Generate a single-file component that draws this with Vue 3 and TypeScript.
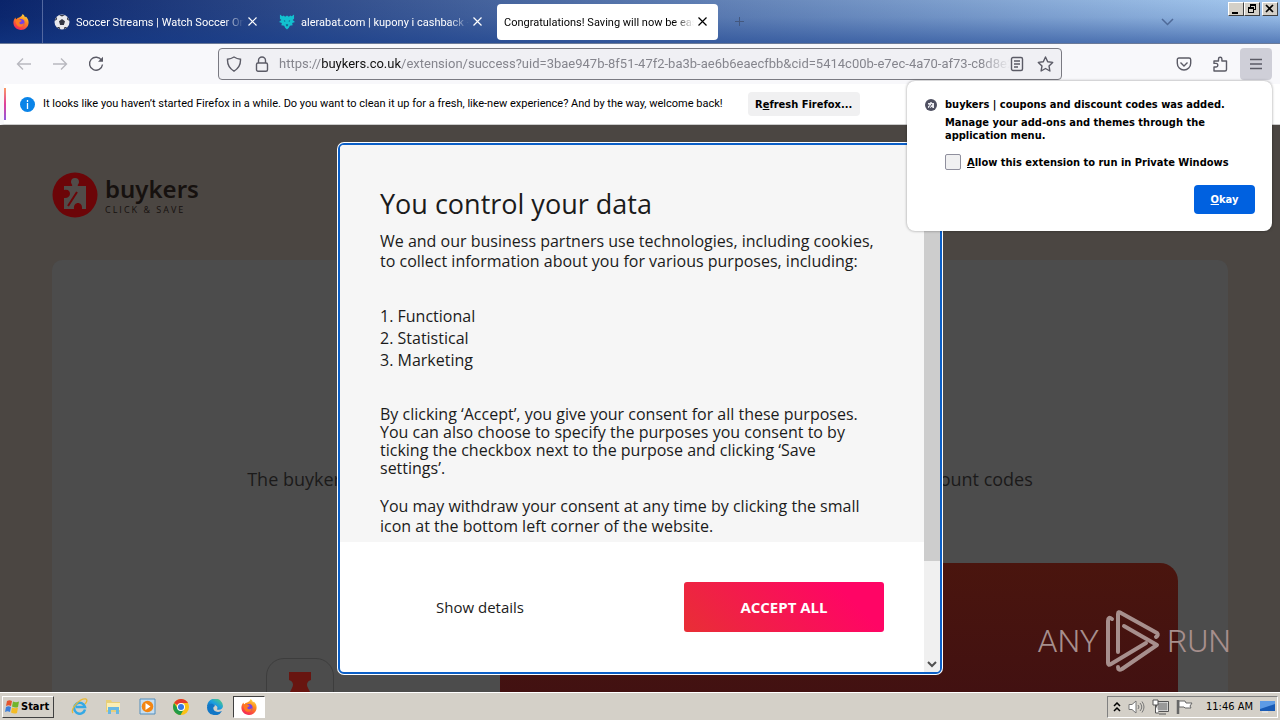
<script setup lang="ts">
import { ref } from 'vue'

interface Tab { title: string; icon: 'ball' | 'wolf' | null; active: boolean }

const tabs: Tab[] = [
  { title: 'Soccer Streams | Watch Soccer Online', icon: 'ball', active: false },
  { title: 'alerabat.com | kupony i cashback - zakupy', icon: 'wolf', active: false },
  { title: 'Congratulations! Saving will now be easier', icon: null, active: true },
]
const purposes = ['Functional', 'Statistical', 'Marketing']
const urlPath = '/extension/success?uid=3bae947b-8f51-47f2-ba3b-ae6b6eaecfbb&cid=5414c00b-e7ec-4a70-af73-c8d8e2'
const allowPrivate = ref(false)
const launchers = ['Internet Explorer', 'File Explorer', 'Media Player', 'Chrome', 'Edge', 'Firefox']
</script>

<template>
  <div class="desktop">
    <svg class="defs" width="0" height="0" aria-hidden="true">
      <defs>
        <linearGradient id="ffBody" x1="0.8" y1="0" x2="0.3" y2="1">
          <stop offset="0" stop-color="#ffe24a" /><stop offset=".4" stop-color="#ff8a1c" /><stop offset="1" stop-color="#f5225a" />
        </linearGradient>
        <linearGradient id="edgeBody" x1="0" y1="1" x2="1" y2="0">
          <stop offset="0" stop-color="#0c59a4" /><stop offset=".5" stop-color="#1b9de2" /><stop offset="1" stop-color="#5fd668" />
        </linearGradient>
        <symbol id="firefox" viewBox="0 0 16 16">
          <path d="M8 16C3.600 16 .4 12.700.4 8.600c0-2.400 1-3.900 2-5.200.1 1 .5 1.600 1 2 .6-1.300 1.700-1.700 2.300-1.700C7.800 2.900 9 1.700 9.600 0c1.300 1 2.100 2 2.400 3.300.5-.1.700-.4.800-.8C14.600 4.200 15.600 6 15.600 8.500 15.600 12.700 12.300 16 8 16Z" fill="url(#ffBody)" />
          <circle cx="8" cy="8.500" r="3.500" fill="#7542e5" />
          <path d="M2.500 6c1.500-1.300 3.600-1.200 4.700 0 1 .2 1.500.6 1.500 1-.9.700-2.200.7-2.400 2 .6 1.400 3.400 1.900 4.700-.2-.1 3-2.300 4.300-4.400 4C3.800 12.200 2.300 9 2.500 6Z" fill="#ff7a22" />
        </symbol>
      </defs>
    </svg>

    <header class="tabstrip">
      <button class="view" aria-label="Firefox View"><svg width="16" height="16"><use href="#firefox" /></svg></button>
      <div v-for="tab in tabs" :key="tab.title" class="tab" :class="{ active: tab.active }">
        <svg v-if="tab.icon === 'ball'" width="16" height="16" viewBox="0 0 16 16">
          <circle cx="8" cy="8" r="7.500" fill="#e9e9ec" />
          <path d="M8 5l3 2.200L9.900 11H6.100L5 7.200ZM5 .9 8 2.500 11 .9ZM.5 7 3 5.500 2.700 2.700ZM15.500 7 13 5.500l.3-2.800ZM2.500 13l3 .1.900 2.300ZM13.500 13l-3 .1-.9 2.300Z" fill="#343743" />
        </svg>
        <svg v-else-if="tab.icon === 'wolf'" width="16" height="16" viewBox="0 0 17 16">
          <path d="M1 0l2.500 2L5 1l1.500 1.500L8.500 1l2 1.500L12 1l1.500 1L16 0v4.500L14.500 6 17 8l-3 1 .5 2.500-3 .5-1 2-2 2-2-2-1-2-3-.5L3 9 0 8l2.500-2L1 4.500Z" fill="#12c1cf" />
          <path d="M5 6l2 1-1 1ZM12 6l-2 1 1 1ZM8.500 10l1.500 1-1.500 2L7 11Z" fill="#16618d" />
        </svg>
        <span class="tab-title">{{ tab.title }}</span>
        <button class="close" :aria-label="'Close ' + tab.title">
          <svg width="9" height="9" viewBox="0 0 9 9"><path d="M.5.5l8 8M8.500.5l-8 8" stroke="currentColor" stroke-width="1.200" /></svg>
        </button>
      </div>
      <button class="newtab" aria-label="New tab"><svg width="9" height="9" viewBox="0 0 9 9"><path d="M4.500 0v9M0 4.500h9" stroke="#44587f" /></svg></button>
      <button class="alltabs" aria-label="List all tabs"><svg width="13" height="8" viewBox="0 0 13 8"><path d="M1 1l5.500 5.500L12 1" fill="none" stroke="#4f6a98" stroke-width="1.500" /></svg></button>
      <div class="winbtns">
        <button aria-label="Minimize"><svg width="14" height="12"><path d="M3 9h6v2H3z" /></svg></button>
        <button aria-label="Restore"><svg width="14" height="12"><path d="M5 1h6v6H9V6h1V3H6v1H5zM3 4h6v6H3zM4 6v3h4V6z" fill-rule="evenodd" /></svg></button>
        <button class="shut" aria-label="Close window"><svg width="14" height="12"><path d="M3 2l7 7M10 2L3 9" stroke="#000" stroke-width="1.700" /></svg></button>
      </div>
    </header>

    <nav class="toolbar">
      <button class="tool faded" aria-label="Back"><svg width="16" height="16" viewBox="0 0 16 16"><path d="M15 8H1.500M7 2.500L1.500 8 7 13.500" /></svg></button>
      <button class="tool faded" aria-label="Forward"><svg width="16" height="16" viewBox="0 0 16 16"><path d="M1 8h13.500M9 2.500L14.500 8 9 13.500" /></svg></button>
      <button class="tool" aria-label="Reload"><svg width="16" height="16" viewBox="0 0 16 16"><path d="M13.600 4.300A6.500 6.500 0 1 0 14.500 8.500" /><path d="M15 .8v5h-5z" fill="#5b5b66" stroke="none" /></svg></button>
      <div class="urlbar">
        <svg width="16" height="16" viewBox="0 0 16 16"><path d="M8 1c2 1.300 4 2 6.500 2.200C14.800 9 12.500 12.600 8 15.200 3.500 12.600 1.200 9 1.500 3.200 4 3 6 2.300 8 1Z" /></svg>
        <svg class="lock" width="14" height="16" viewBox="0 0 14 16"><rect x="1.500" y="7" width="11" height="8.200" rx="1.500" /><path d="M3.500 7V4.500a3.500 3.500 0 0 1 7 0V7" /></svg>
        <div class="address">https://<b>buykers.co.uk</b>{{ urlPath }}</div>
        <button aria-label="Reader view"><svg width="14" height="16" viewBox="0 0 14 16"><rect x="1.500" y="1.500" width="11" height="13" rx="1.500" /><path d="M4 5h6M4 8h6M4 11h4" /></svg></button>
        <button class="star" aria-label="Bookmark"><svg width="17" height="16" viewBox="0 0 17 16"><path d="M8.500 1l2.200 4.700 5 .7-3.700 3.500.9 5.100-4.400-2.500L4.100 15l.9-5.100L1.300 6.400l5-.7Z" stroke-linejoin="round" /></svg></button>
      </div>
      <button class="tool" aria-label="Save to Pocket"><svg width="16" height="16" viewBox="0 0 16 16"><path d="M3 2h10c1 0 1.700.7 1.700 1.700v3.600a6.700 6.700 0 0 1-13.400 0V3.700C1.300 2.700 2 2 3 2Z" /><path d="M4.500 6.500L8 10l3.500-3.500" /></svg></button>
      <button class="tool" aria-label="Extensions"><svg width="16" height="16" viewBox="0 0 16 16"><path d="M2 15v-4h2a1.800 1.800 0 0 0 0-3.600H2V5h4.500V3a1.700 1.700 0 0 1 3.400 0v2H14.500v8.500q0 1.500-1.500 1.500Z" stroke-linejoin="round" /></svg></button>
      <button class="tool menu" aria-label="Application menu"><svg width="14" height="12" viewBox="0 0 14 12"><path d="M1 1.500h12M1 6h12M1 10.500h12" /></svg></button>
    </nav>

    <div class="infobar">
      <svg width="15" height="15" viewBox="0 0 15 15"><circle cx="7.500" cy="7.500" r="7.500" fill="#0a84e8" /><path d="M7.500 3v2M7.500 6v6" stroke="#fff" stroke-width="1.300" /></svg>
      <span>It looks like you haven’t started Firefox in a while. Do you want to clean it up for a fresh, like-new experience? And by the way, welcome back!</span>
      <button>R<u>e</u>fresh Firefox...</button>
    </div>

    <main class="page">
      <div class="brand">
        <svg width="46" height="46" viewBox="0 0 46 46">
          <circle cx="23" cy="23" r="22.500" fill="#6c0508" />
          <path d="M12 14h8c1-1-1-2-1-4a4 4 0 0 1 8 0c0 2-2 3-1 4h8v23h-4c1-8-9-8-8 0H12V26c8 1 8-10 0-8Z" fill="#514c49" />
          <path d="M25 20L16 34" stroke="#6c0508" stroke-width="2" />
        </svg>
        <div class="brand-text"><strong>buykers</strong><small>CLICK &amp; SAVE</small></div>
      </div>
      <section class="card">
        <p>The buykers extension is now installed and will automatically find you the best discount codes</p>
        <div class="pin"><svg width="24" height="24" viewBox="0 0 24 24"><path d="M1 0h22v8c-4 1-5 5-3 8l4 8H0l4-8c2-3 1-7-3-8Z" fill="#681510" /></svg></div>
        <div class="promo"></div>
      </section>
      <div class="watermark">
        <span>ANY</span>
        <svg width="56" height="64" viewBox="0 0 56 64">
          <g fill="none" stroke="#a78f8d" stroke-width="4" stroke-linejoin="round" stroke-linecap="round">
            <path d="M7 10Q3 7 3 12V54Q3 57 6 55L41 34" /><path d="M13 43V5Q13 2 16 4L52 24Q54 26 51 28" /><path d="M19 17L52 36 17 60Q13 62 13 58" />
          </g>
        </svg>
        <span>RUN</span>
      </div>

      <div class="overlay">
        <div class="modal" role="dialog" aria-labelledby="consent-title">
          <div class="modal-main">
            <div class="copy">
              <h1 id="consent-title">You control your data</h1>
              <p>We and our business partners use technologies, including cookies, to collect information about you for various purposes, including:</p>
              <ol><li v-for="(p, i) in purposes" :key="p">{{ i + 1 }}. {{ p }}</li></ol>
              <p class="consent">By clicking ‘Accept’, you give your consent for all these purposes. You can also choose to specify the purposes you consent to by ticking the checkbox next to the purpose and clicking ‘Save settings’.</p>
              <p>You may withdraw your consent at any time by clicking the small icon at the bottom left corner of the website.</p>
            </div>
            <div class="actions">
              <button class="details">Show details</button>
              <button class="accept">ACCEPT ALL</button>
            </div>
          </div>
          <div class="scroll"><i></i><svg width="10" height="7" viewBox="0 0 10 7"><path d="M1 1l4 4 4-4" fill="none" stroke="#505050" stroke-width="2" /></svg></div>
        </div>
      </div>
    </main>

    <aside class="popup" role="dialog" aria-label="Extension added">
      <svg width="12" height="12" viewBox="0 0 12 12"><circle cx="6" cy="6" r="6" fill="#4f5061" /><path d="M3 4h2a1 1 0 1 1 2 0h2v5H7.500a1 1 0 0 0-2 0H3V7c2 0 2-2 0-1.500Z" fill="#ececf1" /><path d="M7 5L4 9" stroke="#4f5061" /></svg>
      <div class="popup-body">
        <strong>buykers | coupons and discount codes was added.</strong>
        <p>Manage your add-ons and themes through the application menu.</p>
        <label><input v-model="allowPrivate" type="checkbox"><span><u>A</u>llow this extension to run in Private Windows</span></label>
        <button><u>O</u>kay</button>
      </div>
    </aside>

    <footer class="taskbar">
      <button class="start">
        <svg width="16" height="16" viewBox="0 0 16 16"><path d="M3 2c2-1 3-1 5 0L7 7C5 6 4 6 2 7Z" fill="#e4552d" /><path d="M9 2.500c2 1 4 1 6 0L14 8c-2 1-4 .5-6-.5Z" fill="#72b52c" /><path d="M2 8c2-1 3-1 5 0l-1 5c-2-1-3-1-5 0Z" fill="#3d7fd9" /><path d="M8 8.500c2 1 4 1 6 0L13 14c-2 1-4 .5-6-.5Z" fill="#f4bc26" /></svg>
        Start
      </button>
      <button v-for="(name, i) in launchers" :key="name" class="launch" :class="{ current: i === 5 }" :aria-label="name">
        <svg v-if="i === 0" width="17" height="17" viewBox="0 0 17 17"><path d="M14 11.500A5.500 5.500 0 1 1 14 9H5" fill="none" stroke="#35a9e5" stroke-width="2.500" /><path d="M2 15C-1 11 9 0 15 1c2 1 0 4-1 5" fill="none" stroke="#e8b936" stroke-width="1.300" /></svg>
        <svg v-else-if="i === 1" width="17" height="17" viewBox="0 0 17 17"><path d="M1 2h5l1 2h8v10H1Z" fill="#e8cf78" /><path d="M2 5h13v7H2Z" fill="#fbeeb4" /><path d="M3 16V9h11v7h-3v-4H6v4Z" fill="#68b8e3" /></svg>
        <svg v-else-if="i === 2" width="17" height="17" viewBox="0 0 17 17"><path d="M1 1h15v15H1Z" fill="#c7def0" stroke="#538fbd" /><circle cx="8.500" cy="8.500" r="5.800" fill="#f38612" /><path d="M6.500 5l5 3.500-5 3.500Z" fill="#fff" /></svg>
        <svg v-else-if="i === 3" width="16" height="16" viewBox="0 0 16 16"><circle cx="8" cy="8" r="8" fill="#fbc116" /><path d="M8 8L1.100 4A8 8 0 0 1 15 4H8Z" fill="#e33b2e" /><path d="M1.100 4A8 8 0 0 0 7.500 16L11 10H5Z" fill="#229b48" /><circle cx="8" cy="8" r="4" fill="#fff" /><circle cx="8" cy="8" r="3" fill="#3478e5" /></svg>
        <svg v-else-if="i === 4" width="16" height="16" viewBox="0 0 16 16"><path d="M0 8a8 8 0 0 1 16-1c0 3-3 4.500-6 3.500 0-1 1-1 0-3C7 4.500 2 5 0 8Z" fill="url(#edgeBody)" /><path d="M0 8c2-4 7-4 8-1-3 1-2 6 3 6 2 0 3-1 4-1a8 8 0 0 1-15-4Z" fill="#1277c6" /></svg>
        <svg v-else width="16" height="16"><use href="#firefox" /></svg>
      </button>
      <div class="tray">
        <svg width="8" height="10" viewBox="0 0 8 10"><path d="M1 4l3-3 3 3M1 9l3-3 3 3" fill="none" stroke="#000" stroke-width="1.500" /></svg>
        <svg width="17" height="14" viewBox="0 0 17 14"><path d="M1 4.500h3L8 1v12L4 9.500H1Z" fill="#fff" stroke="#777" /><path d="M10 5q2 2 0 4M12 3q3.500 4 0 8M14 1.500q4 5.500 0 11" fill="none" stroke="#777" /></svg>
        <svg width="17" height="16" viewBox="0 0 17 16"><path d="M5 3h11v9H5Z" fill="#999" stroke="#fff" /><path d="M4.500 2.500h12v10h-12ZM7 15h7" fill="none" stroke="#555" /><path d="M1 1h5v5H1ZM3.500 6v8H7" fill="#fff" stroke="#555" /></svg>
        <svg width="17" height="16" viewBox="0 0 17 16"><path d="M2 1v14" stroke="#666" stroke-width="2.500" /><path d="M3 2h6l1 2h6l-2 3 1 2H9L8 8H3Z" fill="#fff" stroke="#666" /></svg>
        <time>11:46 AM</time>
        <svg width="15" height="13" viewBox="0 0 15 13"><path d="M0 1h15v10H0Z" fill="#195bb5" /><path d="M0 1h15v3L0 9Z" fill="#5d9be5" /><path d="M2 12h6" stroke="#f0f0f0" /></svg>
      </div>
    </footer>
  </div>
</template>

<style>
body { margin: 0; }
</style>

<style scoped>
* { box-sizing: border-box; }
.desktop { position: relative; display: flex; flex-direction: column; height: 100vh; overflow: hidden; font: 11px/13px "DejaVu Sans Condensed", "DejaVu Sans", sans-serif; color: #000; }
.defs { position: absolute; }
button { font: inherit; color: inherit; border: 0; padding: 0; background: none; }
svg { flex: none; display: block; }
h1, p, ol { margin: 0; padding: 0; }

.tabstrip { display: flex; align-items: center; flex: none; height: 44px; border-bottom: 1px solid #6b7a98; background: linear-gradient(to bottom, rgba(20, 60, 140, 0), rgba(20, 60, 140, .12) 40%, rgba(20, 60, 140, .55)), linear-gradient(to right, #0a246a, #a6caf0); }
.view { display: flex; align-items: center; justify-content: center; width: 43px; height: 43px; border-right: 1px solid #5368a0; }
.tab { display: flex; align-items: center; width: 221px; height: 36px; margin-left: 4px; padding: 0 11px 0 7px; border-radius: 4px; color: #fff; }
.tab > svg { margin-right: 6px; }
.tab-title { flex: 1; min-width: 0; padding-top: 3px; font: 11px/14px Roboto, sans-serif; overflow: hidden; white-space: nowrap; mask-image: linear-gradient(to left, transparent, #000 20px); }
.close { display: flex; margin-left: 4px; }
.active { background: #fff; color: #000; }
.newtab { display: flex; margin-left: 17px; }
.alltabs { display: flex; margin: 0 54px 0 auto; }
.winbtns { display: flex; align-self: flex-start; margin: 2px 2px 0 0; }
.winbtns button { display: flex; width: 16px; height: 14px; border: 1px solid; border-color: #fff #404040 #404040 #fff; background: #d4d0c8; }
.winbtns .shut { margin-left: 2px; }

.toolbar { display: flex; align-items: center; flex: none; height: 40px; padding: 0 8px; background: #f8f8fb; }
.toolbar svg { fill: none; stroke: #5b5b66; stroke-width: 1.400; }
.tool { display: flex; align-items: center; justify-content: center; flex: none; width: 32px; height: 32px; margin-right: 4px; border-radius: 4px; }
.faded { opacity: .4; }
.urlbar { display: flex; align-items: center; flex: 1; min-width: 0; height: 32px; margin: 0 106px 0 102px; padding: 0 7px; border: 1px solid #7a7a82; border-radius: 4px; background: #f0f0f4; }
.lock { margin: 0 10px 0 13px; }
.address { flex: 1; min-width: 0; overflow: hidden; white-space: nowrap; font: 13px/20px Roboto, sans-serif; color: #85858d; mask-image: linear-gradient(to left, transparent, #000 30px); }
.address b { font-weight: 400; color: #111; }
.star { margin-left: 13px; }
.menu { margin-right: 0; background: #cfcfd8; }

.infobar { display: flex; align-items: center; flex: none; height: 41px; padding-left: 16px; border-left: 4px solid #f8f8fb; border-bottom: 1px solid #ccc; background: linear-gradient(#fb9a65, #e0409a, #9059dd) 0 4px / 2px 32px no-repeat, #fff; }
.infobar span { margin-left: 8px; white-space: nowrap; font: 11px/14px Roboto, sans-serif; }
.infobar button { width: 112px; height: 24px; margin-left: 25px; border-radius: 4px; background: #f0f0f1; font-weight: 700; }

.page { position: relative; display: flex; flex-direction: column; flex: 1; min-height: 0; padding: 47px 52px 0; overflow: hidden; background: #4b4642; font-family: "Open Sans", "Noto Sans", sans-serif; }
.brand { display: flex; align-items: center; gap: 7px; flex: none; height: 46px; color: #16110f; }
.brand-text { display: flex; flex-direction: column; }
.brand strong { font: 600 24px/30px "Noto Sans", sans-serif; }
.brand small { font-size: 9px; line-height: 12px; letter-spacing: 2px; }
.card { position: relative; flex: 1; margin-top: 42px; border-radius: 10px 10px 0 0; background: #4c4c4c; }
.card > p { padding-top: 206px; font-size: 18px; line-height: 26px; text-align: center; color: #1b1a1a; }
.pin { position: absolute; left: 214px; bottom: -34px; display: flex; justify-content: center; width: 68px; height: 68px; padding-top: 13px; border: 1px solid #3d3d3d; border-radius: 18px; }
.promo { position: absolute; right: 50px; bottom: 0; width: 678px; height: 129px; border-radius: 0 18px 0 0; background: linear-gradient(#4a150e, #421111); }
.watermark { position: absolute; right: 49px; bottom: 19px; display: flex; align-items: center; gap: 6px; color: #a78f8d; font: 300 32px/64px Roboto, sans-serif; }

.overlay { position: absolute; inset: 0; display: flex; align-items: center; justify-content: center; }
.modal { display: flex; width: 604px; border: 2px solid #0b5fc7; box-shadow: 0 0 0 1px #fff; border-radius: 6px; overflow: hidden; background: #fff; color: #1b1b1b; font-size: 16px; line-height: 20px; }
.modal-main { flex: 1; }
.copy { padding: 39px 40px 6px; background: #f6f6f6; }
h1 { font-weight: 400; font-size: 27px; line-height: 40px; margin-bottom: 7px; }
ol { list-style: none; margin: 34px 0; line-height: 22px; }
.consent { line-height: 18px; margin-bottom: 19px; }
.actions { display: flex; align-items: center; justify-content: space-between; padding: 40px; }
.details { width: 200px; font-size: 15px; }
.accept { width: 200px; height: 50px; border-radius: 3px; background: linear-gradient(45deg, #e82f35, #ff0565 80%); color: #fff; font-weight: 700; font-size: 15px; }
.scroll { display: flex; flex-direction: column; align-items: center; justify-content: space-between; width: 16px; padding-bottom: 4px; background: #f0f0f0; }
.scroll i { width: 16px; height: 416px; background: #cdcdcd; }

.popup { position: absolute; top: 81px; right: 8px; display: flex; width: 365px; padding: 17px; gap: 8px; border-radius: 8px; background: #fff; box-shadow: 0 0 3px rgba(0, 0, 0, .4); font-weight: 700; }
.popup > svg { margin: 1px 0 0 1px; }
.popup-body { display: flex; flex-direction: column; flex: 1; }
.popup p { margin: 5px 40px 12px 0; }
.popup label { display: flex; align-items: center; gap: 6px; }
.popup input { appearance: none; width: 16px; height: 16px; margin: 0; border: 1px solid #8f8f9d; border-radius: 2px; background: #f0f0f1; }
.popup button { align-self: flex-end; width: 61px; height: 29px; margin-top: 15px; border-radius: 4px; background: #0061e0; color: #fff; }

.taskbar { display: flex; align-items: center; flex: none; height: 28px; padding: 0 2px; border-top: 1px solid #fff; background: #d4d0c8; }
.start { display: flex; align-items: center; gap: 1px; width: 52px; height: 22px; margin-right: 9px; padding-left: 1px; border: 1px solid; border-color: #fff #404040 #404040 #fff; font-weight: 700; }
.launch { display: flex; align-items: center; justify-content: center; width: 32px; height: 22px; margin-right: 2px; }
.current { border: 1px solid; border-color: #404040 #fff #fff #404040; background: #fff; }
.tray { display: flex; align-items: center; gap: 7px; height: 22px; margin-left: auto; padding: 0 2px 0 5px; border: 1px solid; border-color: #808080 #fff #fff #808080; }
.tray time { margin-left: 6px; }
</style>
